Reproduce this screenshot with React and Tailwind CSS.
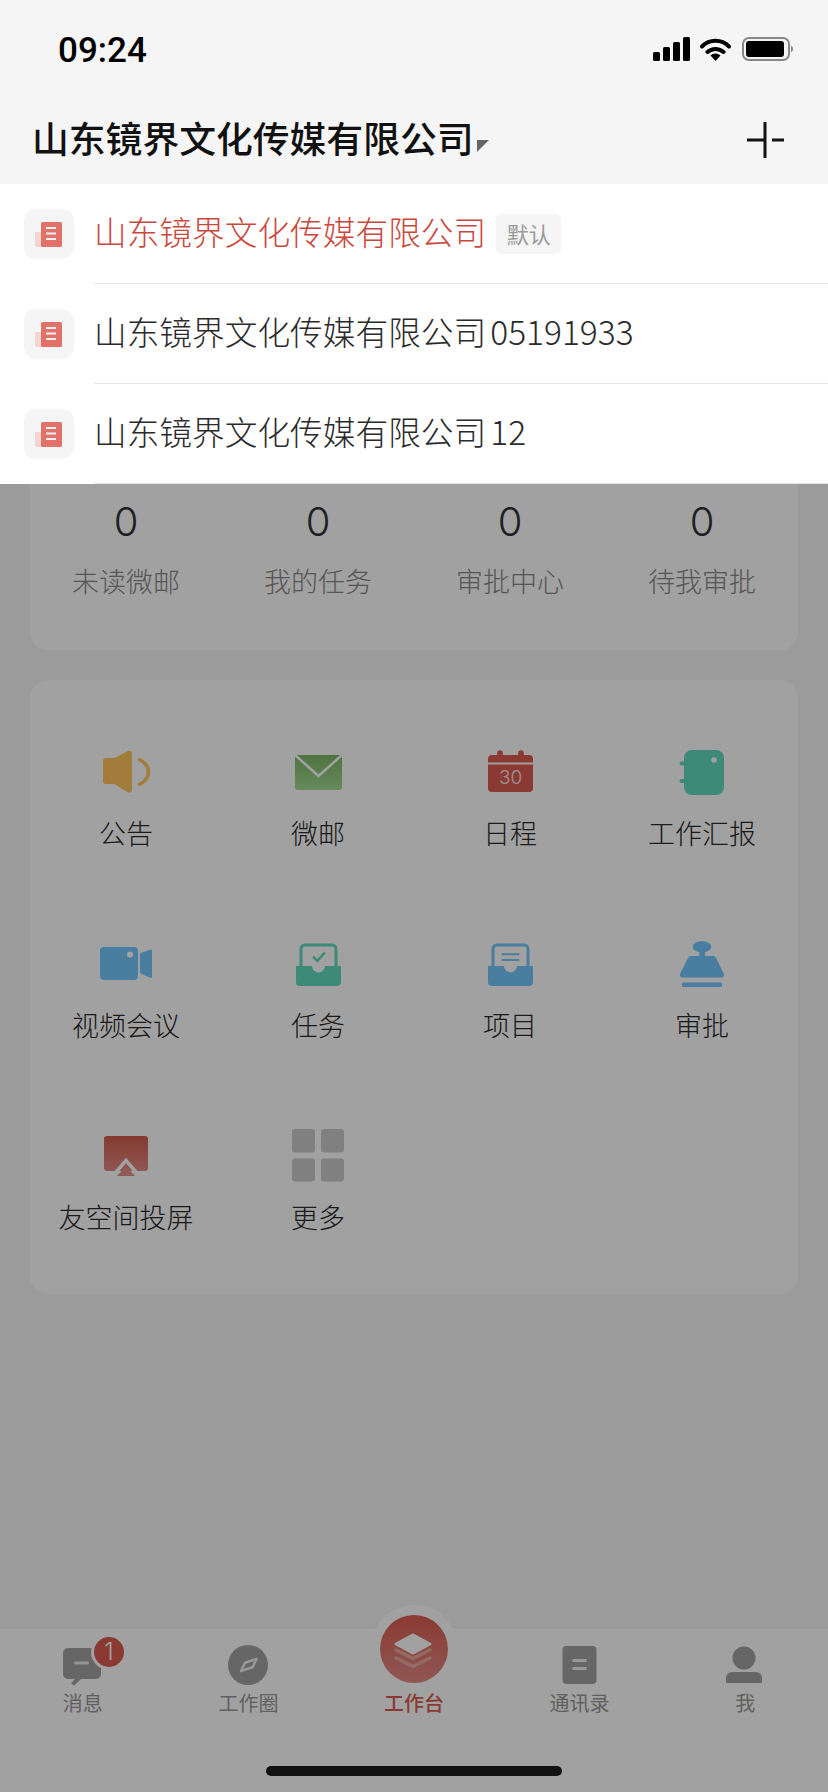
const companies = [
  { name: "山东镜界文化传媒有限公司", active: true },
  { name: "山东镜界文化传媒有限公司", suffix: "05191933" },
  { name: "山东镜界文化传媒有限公司", suffix: "12" },
];

const stats = ["未读微邮", "我的任务", "审批中心", "待我审批"];

const Svg = ({ children }) => (
  <svg width="60" height="60" viewBox="0 0 60 60" className="shrink-0">
    {children}
  </svg>
);

const Speaker = () => (
  <Svg>
    <path d="M10 17h8.500L31 10.500a3 3 0 0 1 5 2V49a3 3 0 0 1-5 2L18.500 43H10a3 3 0 0 1-3-3V20a3 3 0 0 1 3-3z" fill="#ffc45c" />
    <path d="M43.500 18.500C50 22 52.500 27 52.500 31S50 40 43.500 43.500" fill="none" stroke="#ffc45c" strokeWidth="3.500" strokeLinecap="round" />
  </Svg>
);

const Envelope = () => (
  <Svg>
    <defs>
      <linearGradient id="mail" x1="0" y1="0" x2="0" y2="1">
        <stop offset="0" stopColor="#7db766" />
        <stop offset="1" stopColor="#a2db8f" />
      </linearGradient>
    </defs>
    <rect x="7" y="14" width="47" height="35" rx="3" fill="url(#mail)" />
    <path d="M7 14L30.500 35L54 14" fill="none" stroke="#fff" strokeWidth="2.500" />
  </Svg>
);

const Calendar = () => (
  <Svg>
    <path d="M8 21.500V18a4 4 0 0 1 4-4h5.200v-2a2.800 2.800 0 0 1 5.600 0v2h15.400v-2a2.800 2.800 0 0 1 5.600 0v2H49a4 4 0 0 1 4 4v3.500z" fill="#db5c51" />
    <path d="M8 23.500h45V47a4 4 0 0 1-4 4H12a4 4 0 0 1-4-4z" fill="#db5c51" />
    <text x="30.500" y="43" textAnchor="middle" fontSize="19" fill="#fff" fillOpacity="0.85" fontFamily="Inter, sans-serif" fontWeight="300">30</text>
  </Svg>
);

const Notebook = () => (
  <Svg>
    <rect x="12" y="9" width="40" height="45" rx="8" fill="#61dbbe" />
    <path d="M9.500 22.500h4M9.500 40h4" stroke="#61dbbe" strokeWidth="4" strokeLinecap="round" />
    <circle cx="42" cy="19" r="2.800" fill="#fff" />
  </Svg>
);

const Video = () => (
  <Svg>
    <rect x="4" y="14" width="38" height="33" rx="4" fill="#75c8ff" />
    <circle cx="34" cy="21.500" r="3" fill="#fff" />
    <path d="M45 21L55 17.500V44L45 39.500z" fill="#75c8ff" stroke="#75c8ff" strokeWidth="2" strokeLinejoin="round" />
  </Svg>
);

const Tray = ({ color, children }) => (
  <Svg>
    <path d="M13 33V16a4 4 0 0 1 4-4H44a4 4 0 0 1 4 4V33" fill="none" stroke={color} strokeWidth="3" />
    <path d="M8 33H24a6.500 6.500 0 0 0 13 0H53V49a4 4 0 0 1-4 4H12a4 4 0 0 1-4-4z" fill={color} />
    {children}
  </Svg>
);

const Stamp = () => (
  <Svg>
    <ellipse cx="30" cy="13.700" rx="9.300" ry="5.700" fill="#75c8ff" />
    <rect x="27.300" y="18" width="5.700" height="6" fill="#75c8ff" />
    <path d="M19 23H41a3 3 0 0 1 3 2L52 41a2.500 2.500 0 0 1-2 3.500H10a2.500 2.500 0 0 1-2-3.500L16 25a3 3 0 0 1 3-2z" fill="#75c8ff" />
    <rect x="10" y="49.500" width="40" height="4.500" rx="1.500" fill="#75c8ff" />
  </Svg>
);

const Airplay = () => (
  <Svg>
    <defs>
      <linearGradient id="cast" x1="0" y1="0" x2="0" y2="1">
        <stop offset="0" stopColor="#d35a4e" />
        <stop offset="1" stopColor="#e28a84" />
      </linearGradient>
    </defs>
    <rect x="8" y="11" width="44" height="35" rx="3" fill="url(#cast)" />
    <path d="M17.500 50L30 35.500L42.500 50" fill="none" stroke="#fff" strokeWidth="3.500" />
    <path d="M30 41.500L39 51H21z" fill="#e48f89" />
  </Svg>
);

const Grid4 = () => (
  <Svg>
    <rect x="4" y="4" width="23" height="23.500" rx="3" fill="#cbcbcb" />
    <rect x="33" y="4" width="23" height="23.500" rx="3" fill="#cbcbcb" />
    <rect x="4" y="33.500" width="23" height="23" rx="3" fill="#cbcbcb" />
    <rect x="33" y="33.500" width="23" height="23" rx="3" fill="#cbcbcb" />
  </Svg>
);

const apps = [
  { label: "公告", icon: <Speaker /> },
  { label: "微邮", icon: <Envelope /> },
  { label: "日程", icon: <Calendar /> },
  { label: "工作汇报", icon: <Notebook /> },
  { label: "视频会议", icon: <Video /> },
  {
    label: "任务",
    icon: (
      <Tray color="#61dbbe">
        <path d="M25 23.700L29.300 28L37 19.300" fill="none" stroke="#61dbbe" strokeWidth="2.500" />
      </Tray>
    ),
  },
  {
    label: "项目",
    icon: (
      <Tray color="#75c8ff">
        <path d="M21.700 21.300H39.300M21.700 27H39.300" stroke="#75c8ff" strokeWidth="2" />
      </Tray>
    ),
  },
  { label: "审批", icon: <Stamp /> },
  { label: "友空间投屏", icon: <Airplay /> },
  { label: "更多", icon: <Grid4 /> },
];

const TabSvg = ({ children }) => (
  <svg width="60" height="48" viewBox="0 0 60 48">
    {children}
  </svg>
);

const tabs = [
  {
    label: "消息",
    badge: "1",
    icon: (
      <TabSvg>
        <path d="M15 7H43a5 5 0 0 1 5 5V33a5 5 0 0 1-5 5H28L21 44.500L18 42.500L22 38H15a5 5 0 0 1-5-5V12a5 5 0 0 1 5-5z" fill="#a2a2a2" />
        <rect x="21" y="20.500" width="15" height="3" rx="1.500" fill="#fff" fillOpacity="0.8" />
      </TabSvg>
    ),
  },
  {
    label: "工作圈",
    icon: (
      <TabSvg>
        <circle cx="30" cy="24" r="20" fill="#a2a2a2" />
        <path d="M23 30L27 21.700L38.500 18L34.500 26.200z" fill="none" stroke="#fff" strokeOpacity="0.85" strokeWidth="2.500" strokeLinejoin="round" />
      </TabSvg>
    ),
  },
  { label: "工作台", active: true, icon: <div className="h-[48px]" /> },
  {
    label: "通讯录",
    icon: (
      <TabSvg>
        <rect x="12.500" y="5" width="34" height="38" rx="4" fill="#a2a2a2" />
        <path d="M22.500 19.500H36.500M22.500 27.500H36.500" stroke="#fff" strokeOpacity="0.85" strokeWidth="3" />
      </TabSvg>
    ),
  },
  {
    label: "我",
    icon: (
      <TabSvg>
        <circle cx="29" cy="17" r="11.500" fill="#a2a2a2" />
        <path d="M17 31H41a6 6 0 0 1 6 6V42H11V37a6 6 0 0 1 6-6z" fill="#a2a2a2" />
      </TabSvg>
    ),
  },
];

const CompanyIcon = () => (
  <div className="w-[50px] h-[50px] rounded-[12px] bg-[#f5f5f5] shrink-0 mt-[-1px]">
    <svg width="50" height="50" viewBox="0 0 50 50">
      <rect x="11" y="23" width="8" height="15" rx="1" fill="#f4d5d2" />
      <rect x="17" y="13" width="21" height="25" rx="1.500" fill="#e0726a" />
      <path d="M22 19H32M22 24.500H32M22 30H32" stroke="#fff" strokeOpacity="0.9" strokeWidth="2" />
    </svg>
  </div>
);

const Dropdown = () => (
  <div className="absolute top-[184px] left-0 w-full z-20 bg-white">
    {companies.map((c, i) => (
      <div key={i} className="flex items-center h-[100px] pl-6">
        <CompanyIcon />
        <div className="ml-[20px] flex-1 h-full flex items-center border-b border-[#e5e5e5]">
          <span className={c.active ? "text-[32.700px] font-light text-[#c9483e] mt-[-5px]" : "text-[32.700px] font-light text-[#2a2a2a] mt-[-5px]"}>{c.name}</span>
          {c.suffix && <span className="text-[33.500px] font-light text-[#2a2a2a] ml-[4px] mt-[-5px]">{c.suffix}</span>}
          {c.active && (
            <span className="ml-[10px] w-[65px] h-[40px] flex items-center justify-center rounded-[5px] bg-[#f5f5f5] text-[22px] text-[#999]">默认</span>
          )}
        </div>
      </div>
    ))}
  </div>
);

const Header = () => (
  <div className="relative z-20 h-[184px] bg-[#f5f5f5]">
    <div className="h-[98px] flex items-center justify-between pl-[58px] pr-[34px]">
      <span className="font-['Roboto',sans-serif] text-[35px] font-medium text-black mt-[4px]">09:24</span>
      <div className="flex items-center">
        <svg width="37" height="24" viewBox="0 0 37 24">
          <rect x="0" y="15" width="7" height="9" rx="1.500" />
          <rect x="10" y="10" width="7" height="14" rx="1.500" />
          <rect x="20" y="5" width="7" height="19" rx="1.500" />
          <rect x="30" y="0" width="7" height="24" rx="1.500" />
        </svg>
        <svg width="31" height="24" viewBox="0 0 31 24" className="ml-[10px]">
          <path d="M2 9.500A19 19 0 0 1 29 9.500M7.500 15A12 12 0 0 1 23.500 15" fill="none" stroke="#000" strokeWidth="4" strokeLinecap="round" />
          <path d="M10.500 18.500A7 7 0 0 1 20.500 18.500L15.500 24z" />
        </svg>
        <svg width="52" height="24" viewBox="0 0 52 24" className="ml-[11px]">
          <rect x="1" y="1" width="46" height="22" rx="6" fill="none" stroke="#888" strokeWidth="2" />
          <rect x="4" y="4" width="38" height="16" rx="3" />
          <path d="M49 8.500a4 4 0 0 1 0 7z" fill="#888" />
        </svg>
      </div>
    </div>
    <div className="h-[84px] flex items-center justify-between pl-[32px] pr-[44px]">
      <div className="flex items-center">
        <span className="text-[36.800px] font-medium text-[#111] mt-[-5px]">山东镜界文化传媒有限公司</span>
        <svg width="12" height="12" viewBox="0 0 12 12" className="ml-[3px] mt-[12px]">
          <path d="M0 0H12L0 12z" fill="#666" />
        </svg>
      </div>
      <svg width="37" height="36" viewBox="0 0 37 36">
        <path d="M18 0V36M0 18H18M25 18H37" stroke="#111" strokeWidth="3" fill="none" />
      </svg>
    </div>
  </div>
);

const TabBar = () => (
  <div className="relative mt-auto h-[165px] bg-white border-t border-[#ececec] flex">
    <div className="absolute left-[370px] top-[-23px] w-[88px] h-[88px] rounded-full bg-white flex items-center justify-center">
      <div className="w-[68px] h-[68px] rounded-full bg-gradient-to-b from-[#db5c51] to-[#e38a84]">
        <svg width="68" height="68" viewBox="0 0 68 68">
          <path d="M15.500 29L33 19.500L50.500 29L33 38.500z" fill="#fff" stroke="#fff" strokeWidth="2" strokeLinejoin="round" />
          <path d="M16 35L33 43.500L50 35M16 43L33 51.500L50 43" fill="none" stroke="#fff" strokeOpacity="0.35" strokeWidth="3.500" strokeLinecap="round" strokeLinejoin="round" />
        </svg>
      </div>
    </div>
    {tabs.map((t) => (
      <div key={t.label} className="relative flex-1 flex flex-col items-center pt-[13px]">
        {t.icon}
        <span className={t.active ? "h-[28px] leading-[28px] text-[20px] font-medium text-[#db5c51]" : "h-[28px] leading-[28px] text-[20px] text-[#999]"}>{t.label}</span>
        {t.badge && (
          <span className="absolute left-[91px] top-[6px] w-[36px] h-[36px] rounded-full bg-white flex items-center justify-center">
            <span className="w-[30px] h-[30px] rounded-full bg-[#db5c51] flex items-center justify-center font-['Inter',sans-serif] text-[24px] font-light text-white">{t.badge}</span>
          </span>
        )}
      </div>
    ))}
  </div>
);

export default function App() {
  return (
    <div className="relative h-[1792px] overflow-hidden flex flex-col bg-[#f5f5f5] font-['Noto_Sans_CJK_SC',sans-serif]">
      <Header />
      <Dropdown />

      <div className="px-[30px] pt-[256px]">
        <div className="grid grid-cols-4 bg-white rounded-[18px] pt-[57px] pb-[48px]">
          {stats.map((s) => (
            <div key={s} className="flex flex-col items-center">
              <span className="h-[50px] leading-[50px] text-[40px] font-['Inter',sans-serif] font-light text-[#333]">0</span>
              <span className="mt-[14px] mb-[1px] h-[40px] leading-[40px] text-[27px] font-light text-[#888]">{s}</span>
            </div>
          ))}
        </div>

        <div className="mt-[30px] grid grid-cols-4 gap-y-[87px] bg-white rounded-[18px] pt-[66px] pb-[59px]">
          {apps.map((a) => (
            <div key={a.label} className="flex flex-col items-center">
              <div className="h-[50px] flex items-center justify-center">{a.icon}</div>
              <span className="mt-[19px] h-[36px] leading-[36px] text-[27px] font-light text-[#2a2a2a] whitespace-nowrap">{a.label}</span>
            </div>
          ))}
        </div>
      </div>

      <TabBar />

      {/* dimmed layer under the company menu */}
      <div className="absolute inset-0 z-10 bg-black/[0.37]" />
      <div className="absolute z-20 left-[266px] bottom-[16px] w-[296px] h-[10px] rounded-full bg-[#111]" />
    </div>
  );
}
